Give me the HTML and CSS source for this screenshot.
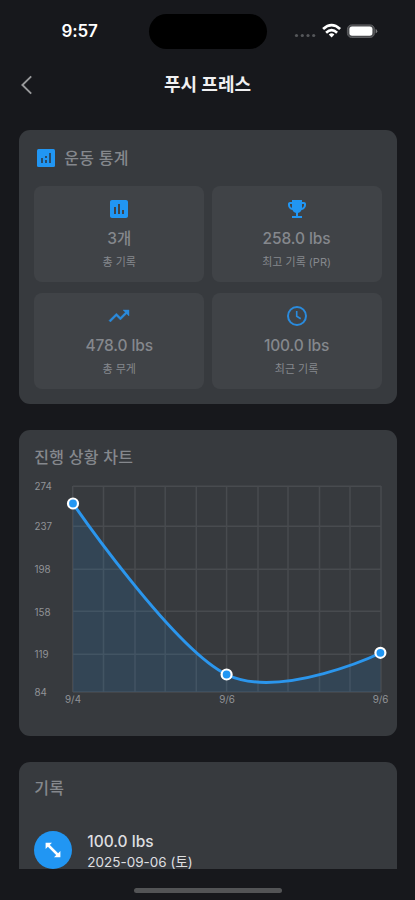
FILE: index.html
```html
<!DOCTYPE html>
<html lang="ko">
<head>
<meta charset="utf-8">
<meta name="viewport" content="width=device-width, initial-scale=1">
<title>푸시 프레스</title>
<link rel="stylesheet" href="styles.css">
</head>
<body>
<div class="status">
  <span class="time">9:57</span>
  <span class="island"></span>
  <svg class="signals" width="84" height="18" viewBox="0 0 84 18">
    <g fill="#55575a"><circle cx="2.5" cy="12.5" r="1.6"/><circle cx="8.3" cy="12.5" r="1.6"/><circle cx="14" cy="12.5" r="1.6"/><circle cx="19.7" cy="12.5" r="1.6"/></g>
    <g fill="none" stroke="#fff" stroke-width="2.7"><path d="M29.1 6.1Q37.6-1.7 46.1 6.1"/><path d="M32.1 9.7Q37.6 4.7 43.1 9.7"/></g>
    <path d="M34.8 11.5Q37.6 9.2 40.4 11.5L37.6 14.6Z" fill="#fff"/>
    <rect x="53.4" y="1.9" width="27" height="12.6" rx="4.2" fill="#4a4b4e" stroke="#5c5d60"/>
    <rect x="55.4" y="3.6" width="23" height="9.2" rx="2.7" fill="#fff"/>
    <path d="M81.6 5.8Q85 8.2 81.6 10.6Z" fill="#7a7b7d"/>
  </svg>
</div>
<header class="bar">
  <svg class="back" width="14" height="20" viewBox="0 0 14 20"><path d="M11.2 1.4L2.4 10L11.2 18.6" fill="none" stroke="#98999b" stroke-width="1.9"/></svg>
  <h1>푸시 프레스</h1>
</header>
<main class="content">
  <section class="card stats">
    <h2 class="heading">
      <svg width="24" height="24" viewBox="0 0 24 24"><rect x="3" y="3" width="18" height="18" rx="1.500" fill="#2196f3"/><path d="M7 12h2v5H7zM15 7h2v10h-2zM11 14h2v3h-2zM11 10h2v2h-2z" fill="#294b69"/></svg>
      <span>운동 통계</span>
    </h2>
    <div class="grid">
      <div class="cell">
        <svg width="24" height="24" viewBox="0 0 24 24"><path fill="#2196f3" d="M19 3H5c-1.100 0-2 .9-2 2v14c0 1.100.9 2 2 2h14c1.100 0 2-.9 2-2V5c0-1.100-.9-2-2-2zM9 17H7v-7h2v7zm4 0h-2V7h2v10zm4 0h-2v-4h2v4z"/></svg>
        <b>3개</b><small>총 기록</small>
      </div>
      <div class="cell">
        <svg width="24" height="24" viewBox="0 0 24 24"><path fill="#2196f3" d="M19 5h-2V3H7v2H5c-1.100 0-2 .9-2 2v1c0 2.550 1.920 4.630 4.390 4.940A5.010 5.010 0 0 0 11 15.900V19H7v2h10v-2h-4v-3.100a5.010 5.010 0 0 0 3.610-2.960C19.080 12.630 21 10.550 21 8V7c0-1.100-.9-2-2-2zM5 8V7h2v3.820C5.840 10.400 5 9.300 5 8zm14 0c0 1.300-.84 2.400-2 2.820V7h2v1z"/></svg>
        <b>258.0 lbs</b><small>최고 기록 (PR)</small>
      </div>
      <div class="cell">
        <svg width="24" height="24" viewBox="0 0 24 24"><path fill="#2a8bdd" stroke="#2a8bdd" stroke-width=".4" d="M16 6l2.290 2.290-4.880 4.880-4-4L2 16.590 3.410 18l6-6 4 4 6.300-6.290L22 12V6z"/></svg>
        <b>478.0 lbs</b><small>총 무게</small>
      </div>
      <div class="cell">
        <svg width="24" height="24" viewBox="0 0 24 24"><circle cx="12" cy="12" r="9" fill="none" stroke="#2a8bdd" stroke-width="2"/><path d="M11.700 7v5.300l4 2.500" fill="none" stroke="#2a8bdd" stroke-width="1.600"/></svg>
        <b>100.0 lbs</b><small>최근 기록</small>
      </div>
    </div>
  </section>
  <section class="card progress">
    <h2>진행 상황 차트</h2>
    <svg class="chart" width="358" height="230" viewBox="34 480 358 230">
      <g class="lines">
        <path d="M73 486.300H381M73 526.300H381M73 569.300H381M73 611.300H381M73 654.300H381M73 692H381"/>
        <path d="M72.700 486V692M103.500 486V692M135 486V692M165.200 486V692M196.300 486V692M226.600 486V692M258 486V692M288 486V692M319.500 486V692M350 486V692M381 486V692"/>
      </g>
      <path class="area" d="M73 503.500C73 503.500 172.700 648.300 226.500 674.500S380.500 653 380.500 653V692H73Z"/>
      <path class="curve" d="M73 503.500C73 503.500 172.700 648.300 226.500 674.500S380.500 653 380.500 653"/>
      <g class="dots"><circle cx="73" cy="503.500" r="5"/><circle cx="226.600" cy="674.500" r="5"/><circle cx="380.400" cy="652.800" r="5"/></g>
      <g class="labels">
        <text x="34.500" y="490.300">274</text><text x="34.500" y="530.300">237</text><text x="34.500" y="572.800">198</text><text x="34.500" y="615.600">158</text><text x="34.500" y="658">119</text><text x="34.500" y="695.800">84</text>
        <g text-anchor="middle"><text x="73" y="702.800">9/4</text><text x="227" y="702.800">9/6</text><text x="380.500" y="702.800">9/6</text></g>
      </g>
    </svg>
  </section>
  <section class="card records">
    <h2>기록</h2>
    <div class="record">
      <span class="badge"><svg width="18" height="18" viewBox="0 0 18 18"><path d="M4.500 4.500L13.500 13.500" stroke="#fff" stroke-width="2.500"/><path d="M1.600 1.700H8L1.600 8.100ZM16.400 16.300H10L16.400 9.900Z" fill="#fff"/></svg></span>
      <div class="detail"><b>100.0 lbs</b><span>2025-09-06 (토)</span></div>
    </div>
  </section>
</main>
<footer class="home"><span></span></footer>
</body>
</html>
```
FILE: styles.css
```css
* { box-sizing: border-box; }
body {
  margin: 0;
  height: 900px;
  overflow: hidden;
  display: flex;
  flex-direction: column;
  background: #17181c;
  color: #85888d;
  font-family: Inter, "Noto Sans CJK KR", sans-serif;
}
svg { display: block; flex: none; }
h1, h2 { margin: 0; }
.status {
  height: 62px;
  display: grid;
  grid-template-columns: 149px 118px 1fr;
  align-items: center;
}
.time { padding-left: 10px; text-align: center; color: #fff; font-size: 17px; font-weight: 600; line-height: 20px; letter-spacing: -0.200px; }
.island { height: 35px; border-radius: 18px; background: #000; }
.signals { margin: 1px 0 0 27px; }
.bar {
  height: 46px;
  display: grid;
  grid-template-columns: 60px 1fr 60px;
  align-items: center;
}
.back { margin-left: 20px; }
h1 { color: #f0f0f1; font-size: 18px; font-weight: 700; line-height: 24px; text-align: center; }
.content {
  height: 760.500px;
  padding: 22px 18.500px 0 19.300px;
  overflow: hidden;
}
.card { padding: 0 15px; background: #373a3e; border-radius: 11px; }
h2 { font-size: 16px; font-weight: 500; line-height: 24px; letter-spacing: 0.250px; }
.stats { height: 273.500px; padding-top: 16px; margin-bottom: 26px; }
.heading { display: flex; gap: 6px; align-items: center; }
.grid {
  margin-top: 16px;
  display: grid;
  grid-template-columns: 1fr 1fr;
  grid-template-rows: 96px 95.500px;
  gap: 11px 7.500px;
}
.cell {
  padding-top: 10.500px;
  display: flex;
  flex-direction: column;
  align-items: center;
  background: #404347;
  border-radius: 8px;
}
.cell b { margin-top: 8px; font-size: 15.500px; font-weight: 500; line-height: 20px; letter-spacing: -0.100px; }
.cell small { margin-top: 6px; font-size: 11px; line-height: 15px; }
.progress { height: 306px; padding-top: 15px; margin-bottom: 26.500px; }
.chart { margin-top: 11.500px; }
.lines { fill: none; stroke: #484b4f; stroke-width: 1.500; }
.area { fill: #2196f3; fill-opacity: 0.130; }
.curve { fill: none; stroke: #2b96ed; stroke-width: 3; }
.dots { fill: #2196f3; stroke: #fff; stroke-width: 2.200; }
.labels { fill: #919397; font-size: 9.800px; }
.records { height: 200px; padding-top: 14px; }
.record { margin-top: 31px; display: flex; gap: 15px; }
.badge {
  width: 38px;
  height: 38px;
  display: flex;
  align-items: center;
  justify-content: center;
  background: #2196f3;
  border-radius: 50%;
}
.detail { padding-top: 1px; display: flex; flex-direction: column; color: #dedfe0; white-space: nowrap; }
.detail b { font-size: 15.500px; font-weight: 500; line-height: 20px; }
.detail span { font-size: 13.500px; line-height: 20px; }
.home { height: 31.500px; display: flex; justify-content: center; align-items: center; padding-top: 12px; }
.home span { width: 148px; height: 5px; border-radius: 3px; background: #535456; }
```
